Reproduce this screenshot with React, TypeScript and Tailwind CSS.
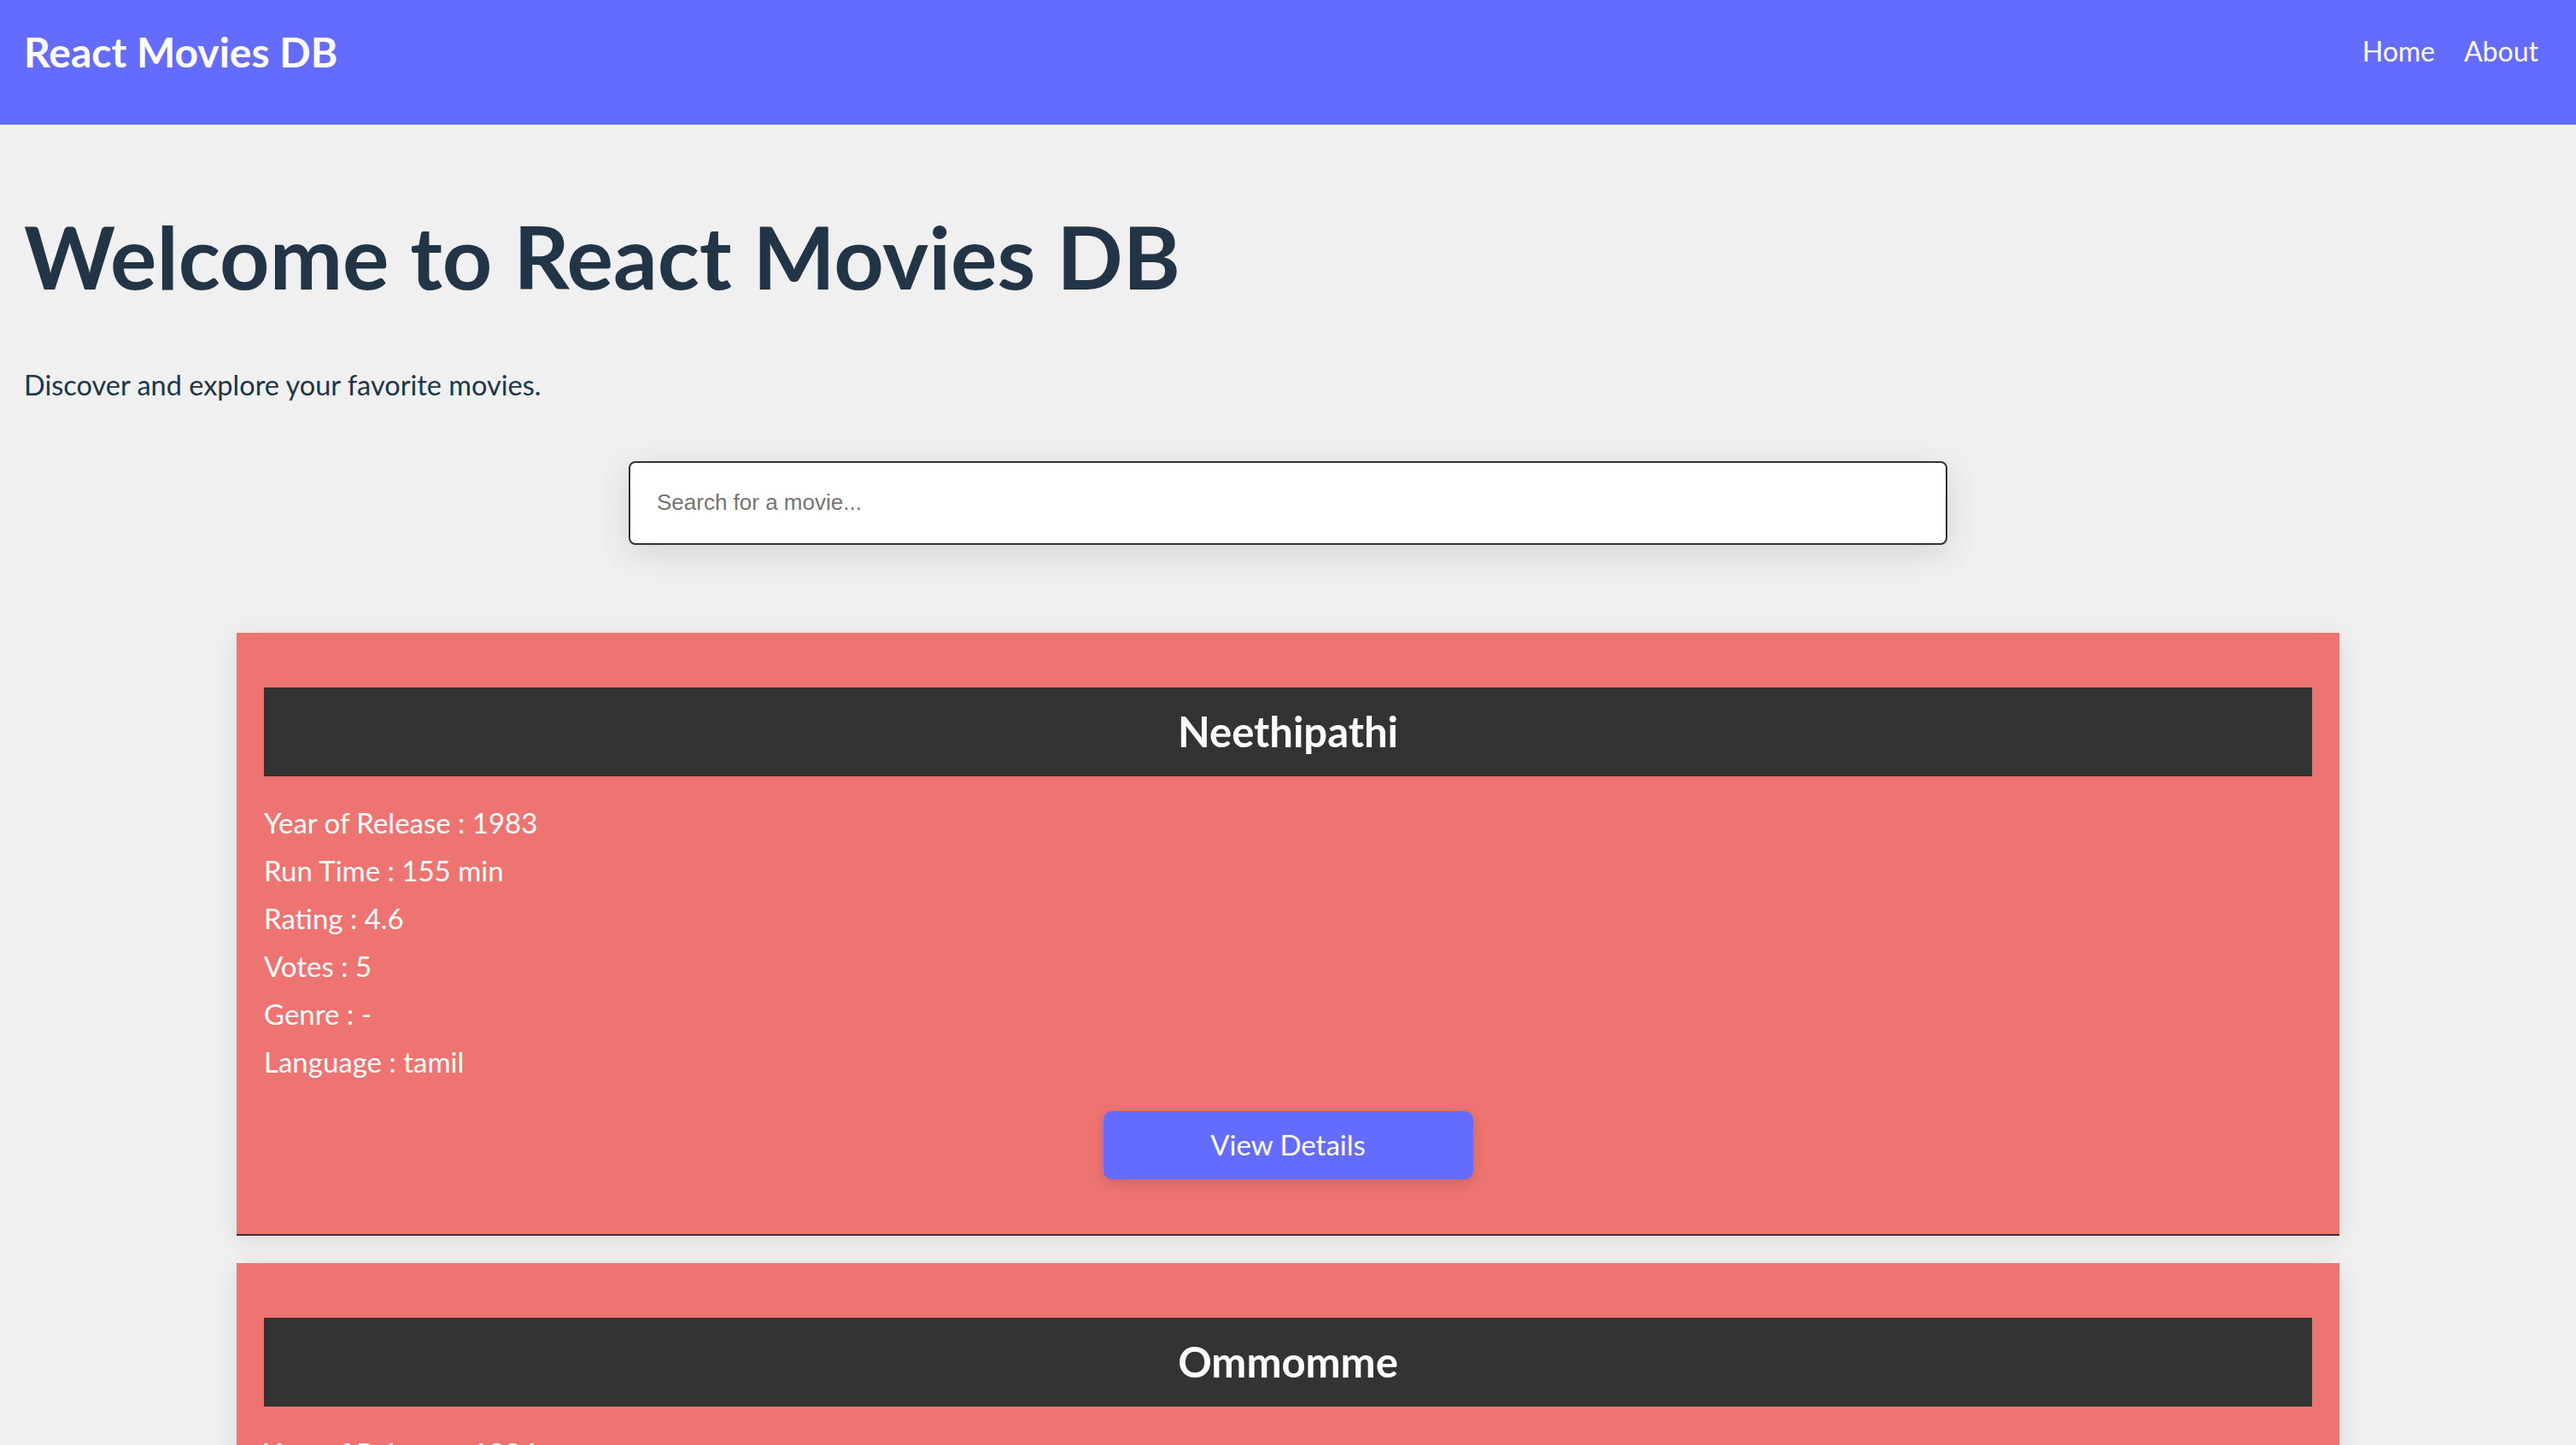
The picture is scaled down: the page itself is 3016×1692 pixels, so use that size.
const movies = [
  {
    title: "Neethipathi",
    year: 1983,
    runtime: "155 min",
    rating: 4.6,
    votes: 5,
    genre: "-",
    language: "tamil",
  },
  {
    title: "Ommomme",
    year: 1996,
    runtime: "140 min",
    rating: 6.2,
    votes: 12,
    genre: "Drama",
    language: "kannada",
  },
  {
    title: "Kaaval",
    year: 2015,
    runtime: "128 min",
    rating: 5.1,
    votes: 34,
    genre: "Action",
    language: "tamil",
  },
];

const MovieCard = ({ movie }: { movie: (typeof movies)[number] }) => {
  return (
    <div className="w-[2462px] mx-auto bg-[#ee7471] px-[32px] pt-[64px] pb-[64px] border-b-2 border-[#333333] shadow-[0_4px_24px_rgba(0,0,0,0.1)]">
      <div className="h-[104px] bg-[#333333] flex items-center justify-center">
        <h2 className="font-['Lato',sans-serif] font-bold text-[49px] leading-none text-white">
          {movie.title}
        </h2>
      </div>
      <div className="mt-[26px] flex flex-col text-white font-['Lato',sans-serif] text-[33px] leading-[56px]">
        <span>Year of Release : {movie.year}</span>
        <span>Run Time : {movie.runtime}</span>
        <span>Rating : {movie.rating}</span>
        <span>Votes : {movie.votes}</span>
        <span>Genre : {movie.genre}</span>
        <span>Language : {movie.language}</span>
      </div>
      <div className="flex justify-center mt-[30px]">
        <button className="w-[433px] h-[80px] rounded-[10px] bg-[#646cff] text-white font-['Lato',sans-serif] text-[33px] shadow-[0_4px_16px_rgba(0,0,0,0.15)]">
          View Details
        </button>
      </div>
    </div>
  );
};

const App = () => {
  return (
    <div className="min-h-screen w-full bg-[#f0f0f0]">
      <header className="h-[146px] bg-[#646cff] flex flex-row justify-between pl-[28px] pr-[44px]">
        <span className="pt-[37px] font-['Lato',sans-serif] font-bold text-[48px] leading-none text-white">
          React Movies DB
        </span>
        <nav className="pt-[44px] flex flex-row gap-[34px] font-['Lato',sans-serif] text-[32px] leading-none text-white">
          <a href="#">Home</a>
          <a href="#">About</a>
        </nav>
      </header>

      <section className="px-[28px]">
        <h1 className="mt-[103px] font-['Lato',sans-serif] font-bold text-[102px] leading-none text-[#213547]">
          Welcome to React Movies DB
        </h1>
        <p className="mt-[84px] font-['Lato',sans-serif] text-[32.5px] leading-none text-[#213547]">
          Discover and explore your favorite movies.
        </p>
      </section>

      <div className="mt-[72px] flex justify-center">
        <input
          type="text"
          placeholder="Search for a movie..."
          className="w-[1544px] h-[98px] rounded-lg border-2 border-[#333333] bg-white px-[31px] font-['Liberation_Sans',Arial,sans-serif] text-[26px] placeholder:text-[#757575] shadow-[0_10px_36px_rgba(0,0,0,0.12)] focus:outline-none"
        />
      </div>

      <div className="mt-[103px] flex flex-col gap-[32px] pb-[64px]">
        {movies.map((movie, index) => (
          <MovieCard key={index} movie={movie} />
        ))}
      </div>
    </div>
  );
};

export default App;
